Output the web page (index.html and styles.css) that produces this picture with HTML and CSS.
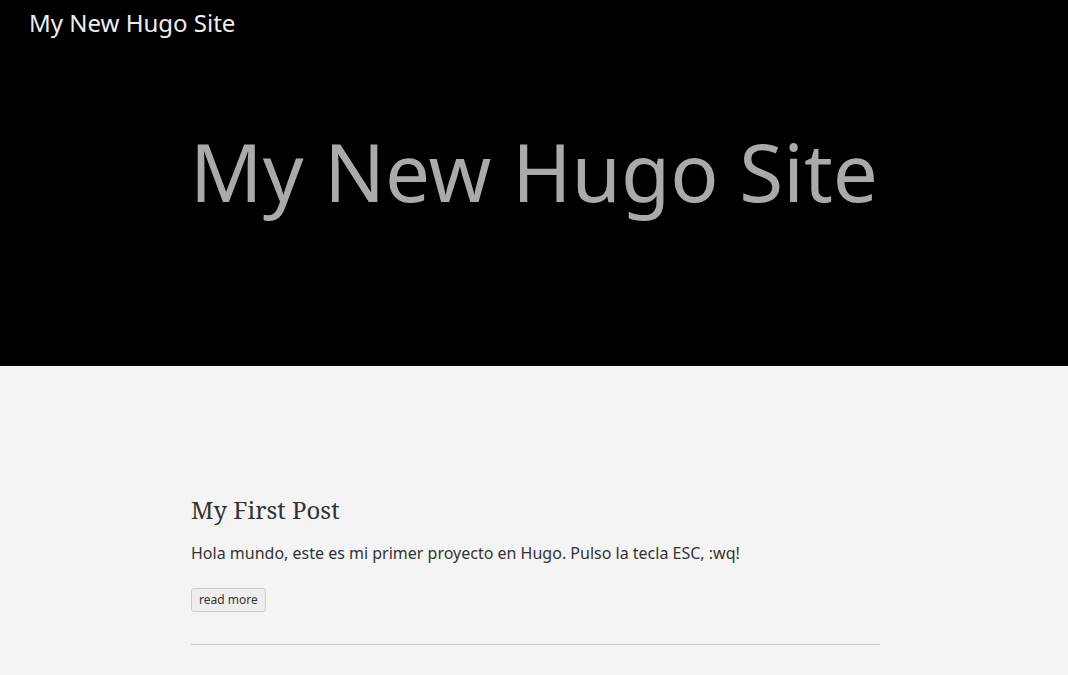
FILE: index.html
```html
<!DOCTYPE html>
<html lang="en">
<head>
<meta charset="utf-8">
<title>My New Hugo Site</title>
<link rel="stylesheet" href="styles.css">
</head>
<body>
<header class="hero">
  <nav class="nav">
    <a class="brand" href="#">My New Hugo Site</a>
  </nav>
  <div class="hero-body">
    <h1 class="hero-title">My New Hugo Site</h1>
  </div>
</header>
<main class="main">
  <article class="post">
    <h2 class="post-title">My First Post</h2>
    <p class="post-summary">Hola mundo, este es mi primer proyecto en Hugo. Pulso la tecla ESC, :wq!</p>
    <a class="read-more" href="#">read more</a>
  </article>
</main>
</body>
</html>
```
FILE: styles.css
```css
html, body {
  margin: 0;
  padding: 0;
}
body {
  background: #f4f4f4;
  font-family: "Noto Sans", "Open Sans", sans-serif;
  color: #333;
}
.hero {
  background: #000;
  height: 366px;
  display: flex;
  flex-direction: column;
}
.nav {
  padding: 8px 29px 0;
  line-height: 30px;
}
.brand {
  color: #eeeeee;
  text-decoration: none;
  font-size: 24px;
}
.hero-body {
  display: flex;
  justify-content: center;
}
.hero-title {
  margin: 80px 0 0;
  font-size: 80px;
  font-weight: 400;
  line-height: 100px;
  color: #aaaaaa;
}
.main {
  width: 689px;
  margin-left: calc(50% - 343px);
  padding-top: 129px;
}
.post {
  border-bottom: 1px solid #cccccc;
  padding-bottom: 32px;
}
.post-title {
  margin: 0;
  font-family: "Noto Serif", "DejaVu Serif", serif;
  font-weight: 400;
  font-size: 24px;
  line-height: 30px;
  color: #333;
}
.post-summary {
  margin: 16px 0 22px;
  font-size: 16px;
  line-height: 24px;
}
.read-more {
  display: inline-block;
  font-size: 12px;
  line-height: 16px;
  padding: 3px 7px;
  border: 1px solid #cccccc;
  border-radius: 3px;
  background: #eeeeee;
  color: #333;
  text-decoration: none;
}
```
